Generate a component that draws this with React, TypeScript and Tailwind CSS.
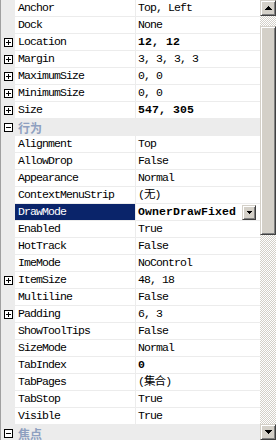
import React from "react";

type Row =
  | { kind: "prop"; name: string; value: string; bold?: boolean; expand?: boolean; selected?: boolean; dropdown?: boolean }
  | { kind: "cat"; name: string };

const rows: Row[] = [
  { kind: "prop", name: "Anchor", value: "Top, Left" },
  { kind: "prop", name: "Dock", value: "None" },
  { kind: "prop", name: "Location", value: "12, 12", bold: true, expand: true },
  { kind: "prop", name: "Margin", value: "3, 3, 3, 3", expand: true },
  { kind: "prop", name: "MaximumSize", value: "0, 0", expand: true },
  { kind: "prop", name: "MinimumSize", value: "0, 0", expand: true },
  { kind: "prop", name: "Size", value: "547, 305", bold: true, expand: true },
  { kind: "cat", name: "行为" },
  { kind: "prop", name: "Alignment", value: "Top" },
  { kind: "prop", name: "AllowDrop", value: "False" },
  { kind: "prop", name: "Appearance", value: "Normal" },
  { kind: "prop", name: "ContextMenuStrip", value: "(无)" },
  { kind: "prop", name: "DrawMode", value: "OwnerDrawFixed", bold: true, selected: true, dropdown: true },
  { kind: "prop", name: "Enabled", value: "True" },
  { kind: "prop", name: "HotTrack", value: "False" },
  { kind: "prop", name: "ImeMode", value: "NoControl" },
  { kind: "prop", name: "ItemSize", value: "48, 18", expand: true },
  { kind: "prop", name: "Multiline", value: "False" },
  { kind: "prop", name: "Padding", value: "6, 3", expand: true },
  { kind: "prop", name: "ShowToolTips", value: "False" },
  { kind: "prop", name: "SizeMode", value: "Normal" },
  { kind: "prop", name: "TabIndex", value: "0", bold: true },
  { kind: "prop", name: "TabPages", value: "(集合)" },
  { kind: "prop", name: "TabStop", value: "True" },
  { kind: "prop", name: "Visible", value: "True" },
  { kind: "cat", name: "焦点" },
];

// little [+] / [-] box in the gutter
const ExpandBox = ({ open }: { open?: boolean }) => (
  <svg width="9" height="9" viewBox="0 0 9 9" shapeRendering="crispEdges">
    <rect x="0.5" y="0.5" width="8" height="8" fill="#fff" stroke="#000" />
    <line x1="2" y1="4.5" x2="7" y2="4.5" stroke="#000" />
    {!open && <line x1="4.5" y1="2" x2="4.5" y2="7" stroke="#000" />}
  </svg>
);

const Arrow = ({ up }: { up?: boolean }) => (
  <svg width="7" height="4" viewBox="0 0 7 4" shapeRendering="crispEdges">
    <path d={up ? "M3.5 0 L7 4 L0 4 Z" : "M0 0 L7 0 L3.5 4 Z"} fill="#000" />
  </svg>
);

const bevel =
  "bg-[#d4d0c8] border border-t-[#d4d0c8] border-l-[#d4d0c8] border-r-[#404040] border-b-[#404040] shadow-[inset_1px_1px_#ffffff,inset_-1px_-1px_#808080]";

const checker =
  "bg-[repeating-conic-gradient(#d4d0c8_0%_25%,#ffffff_0%_50%)] bg-[length:2px_2px]";

export default function App() {
  return (
    <div className="w-[276px] h-[440px] overflow-hidden flex bg-white font-['Liberation_Mono','Noto_Sans_CJK_SC',monospace] text-[11.5px] text-black">
      {/* Grid */}
      <div className="flex-1 flex flex-col border-l border-[#a0a0a0]">
        {rows.map((row, i) =>
          row.kind === "cat" ? (
            <div key={i} className="flex h-[17px] shrink-0 bg-[#ececec]">
              <div className="w-[14px] flex items-center justify-center">
                <ExpandBox open />
              </div>
              <div className="pl-[3px] flex items-center font-bold text-[12px] text-[#8ea0c0] font-['Noto_Sans_CJK_SC',sans-serif]">
                {row.name}
              </div>
            </div>
          ) : (
            <div key={i} className="flex h-[17px] shrink-0">
              <div className="w-[14px] bg-[#ececec] flex items-center justify-center">
                {row.expand && <ExpandBox />}
              </div>
              <div
                className={`w-[120px] pl-[3px] flex items-center border-b border-[#ececec] tracking-[-0.9px] whitespace-pre ${
                  row.selected ? "bg-[#0a246a] text-white" : ""
                }`}
              >
                {row.name}
              </div>
              <div className="w-px bg-[#ececec]" />
              <div className="flex-1 pl-[2px] pr-[4px] flex items-center justify-between border-b border-[#ececec] whitespace-pre">
                <span className={row.bold ? "font-bold tracking-[0.1px]" : "tracking-[-0.9px]"}>{row.value}</span>
                {row.dropdown && (
                  <div className={`w-[14px] h-[15px] flex items-center justify-center ${bevel}`}>
                    <svg width="5" height="3" viewBox="0 0 5 3" shapeRendering="crispEdges">
                      <path d="M0 0 L5 0 L2.5 3 Z" fill="#000" />
                    </svg>
                  </div>
                )}
              </div>
            </div>
          )
        )}
      </div>

      {/* Scrollbar */}
      <div className={`w-[16px] flex flex-col ${checker}`}>
        <div className={`h-[16px] shrink-0 flex items-center justify-center ${bevel}`}>
          <Arrow up />
        </div>
        <div className="h-[10px] shrink-0" />
        <div className={`h-[209px] shrink-0 ${bevel}`} />
        <div className="flex-1" />
        <div className={`h-[16px] shrink-0 flex items-center justify-center ${bevel}`}>
          <Arrow />
        </div>
      </div>
    </div>
  );
}
